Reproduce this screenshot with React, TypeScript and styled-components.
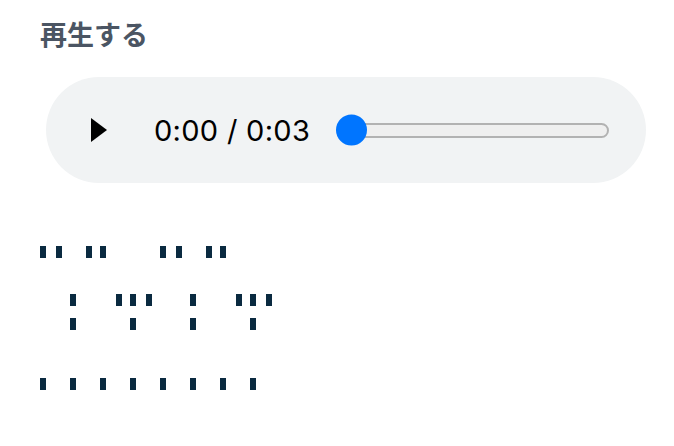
import styled, { createGlobalStyle } from 'styled-components';

const GlobalStyle = createGlobalStyle`
  body {
    margin: 0;
    background: #fff;
    font-family: "Noto Sans CJK JP", "Noto Sans", sans-serif;
  }
`;

const Page = styled.div`
  padding: 0 40px;
  width: 674px;
  height: 446px;
  box-sizing: border-box;
  overflow: hidden;
`;

const Heading = styled.h2`
  margin: 15px 0 0;
  font-size: 27px;
  line-height: 38px;
  font-weight: 700;
  color: #4b5563;
  font-family: "Noto Sans CJK JP", sans-serif;
`;

const Player = styled.div`
  margin: 24px 0 0 6px;
  width: 600px;
  height: 106px;
  border-radius: 53px;
  background: #f1f3f4;
  display: flex;
  align-items: center;
  padding-left: 45px;
  box-sizing: border-box;
`;

const PlayButton = styled.button`
  width: 16px;
  height: 24px;
  padding: 0;
  border: none;
  background: transparent;
  display: flex;
  cursor: pointer;
`;

const Time = styled.span`
  margin-left: 47px;
  font-family: Inter, "Liberation Sans", sans-serif;
  font-size: 29px;
  letter-spacing: 0.3px;
  color: #000;
  white-space: nowrap;
`;

const Slider = styled.div`
  position: relative;
  margin-left: 27px;
  width: 272px;
  height: 15px;
  box-sizing: border-box;
  border: 2px solid #b2b2b2;
  border-radius: 8px;
  background: #efefef;
`;

const Thumb = styled.span`
  position: absolute;
  left: -3px;
  top: 50%;
  width: 31px;
  height: 31px;
  border-radius: 50%;
  background: #0075ff;
  transform: translateY(-50%);
`;

const Braille = styled.div`
  margin-top: 63px;
  display: flex;
  flex-direction: column;
  gap: 48px;
`;

const Line = styled.div`
  display: flex;
  gap: 8px;
`;

const Cell = styled.div`
  display: grid;
  grid-template-columns: 6px 6px;
  grid-template-rows: repeat(4, 12px);
  column-gap: 10px;
  row-gap: 12px;
`;

const Dot = styled.span<{ $on: boolean }>`
  background: ${(p) => (p.$on ? '#0a2a40' : 'transparent')};
`;

// dots in reading order: row by row, left then right
const lines: string[][] = [
  ['11000000', '01001010', '10000100', '00001110', '11000000', '01001010', '10000100', '00001110'],
  ['10000000', '10000000', '10000000', '10000000', '10000000', '10000000', '10000000', '10000000'],
];

function App() {
  return (
    <>
      <GlobalStyle />
      <Page>
        <Heading>再生する</Heading>
        <Player>
          <PlayButton aria-label="play">
            <svg width="16" height="24" viewBox="0 0 16 24">
              <path d="M0 0 L16 12 L0 24 Z" fill="#000" />
            </svg>
          </PlayButton>
          <Time>0:00 / 0:03</Time>
          <Slider>
            <Thumb />
          </Slider>
        </Player>
        <Braille>
          {lines.map((cells, i) => (
            <Line key={i}>
              {cells.map((c, j) => (
                <Cell key={j}>
                  {c.split('').map((d, k) => (
                    <Dot key={k} $on={d === '1'} />
                  ))}
                </Cell>
              ))}
            </Line>
          ))}
        </Braille>
      </Page>
    </>
  );
}

export default App;
